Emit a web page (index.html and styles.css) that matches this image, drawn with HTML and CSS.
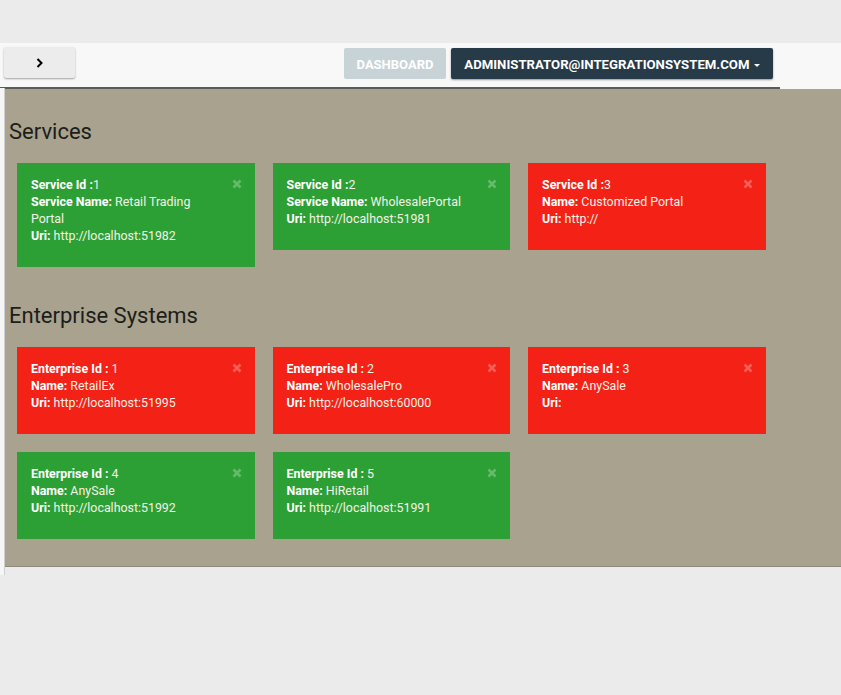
FILE: index.html
```html
<!DOCTYPE html>
<html>
<head>
<meta charset="utf-8">
<link rel="stylesheet" href="styles.css">
</head>
<body>
<header class="navbar">
  <div class="navbar-inner">
    <button class="toggle">
      <svg width="8" height="10" viewBox="0 0 8 10"><path d="M1.5 1 L5.5 5 L1.5 9" fill="none" stroke="#000" stroke-width="2"/></svg>
    </button>
    <div class="nav-right">
      <button class="btn btn-dash">DASHBOARD</button>
      <button class="btn btn-user">ADMINISTRATOR@INTEGRATIONSYSTEM.COM <span class="caret"></span></button>
    </div>
  </div>
</header>
<div class="layout">
  <aside class="strip"></aside>
  <main class="content">
    <h2 class="section-title">Services</h2>
    <div class="cards">
      <div class="card ok">
        <svg class="close" viewBox="0 0 10 10"><path d="M1.5 1.5 L8.5 8.5 M8.5 1.5 L1.5 8.5"/></svg>
        <div class="card-body">
          <div><b>Service Id :</b>1</div>
          <div><b>Service Name:</b> Retail Trading Portal</div>
          <div><b>Uri:</b> http://localhost:51982</div>
        </div>
      </div>
      <div class="card ok">
        <svg class="close" viewBox="0 0 10 10"><path d="M1.5 1.5 L8.5 8.5 M8.5 1.5 L1.5 8.5"/></svg>
        <div class="card-body">
          <div><b>Service Id :</b>2</div>
          <div><b>Service Name:</b> WholesalePortal</div>
          <div><b>Uri:</b> http://localhost:51981</div>
        </div>
      </div>
      <div class="card bad">
        <svg class="close" viewBox="0 0 10 10"><path d="M1.5 1.5 L8.5 8.5 M8.5 1.5 L1.5 8.5"/></svg>
        <div class="card-body">
          <div><b>Service Id :</b>3</div>
          <div><b>Name:</b> Customized Portal</div>
          <div><b>Uri:</b> http://</div>
        </div>
      </div>
    </div>
    <h2 class="section-title second">Enterprise Systems</h2>
    <div class="cards">
      <div class="card bad">
        <svg class="close" viewBox="0 0 10 10"><path d="M1.5 1.5 L8.5 8.5 M8.5 1.5 L1.5 8.5"/></svg>
        <div class="card-body">
          <div><b>Enterprise Id :</b> 1</div>
          <div><b>Name:</b> RetailEx</div>
          <div><b>Uri:</b> http://localhost:51995</div>
        </div>
      </div>
      <div class="card bad">
        <svg class="close" viewBox="0 0 10 10"><path d="M1.5 1.5 L8.5 8.5 M8.5 1.5 L1.5 8.5"/></svg>
        <div class="card-body">
          <div><b>Enterprise Id :</b> 2</div>
          <div><b>Name:</b> WholesalePro</div>
          <div><b>Uri:</b> http://localhost:60000</div>
        </div>
      </div>
      <div class="card bad">
        <svg class="close" viewBox="0 0 10 10"><path d="M1.5 1.5 L8.5 8.5 M8.5 1.5 L1.5 8.5"/></svg>
        <div class="card-body">
          <div><b>Enterprise Id :</b> 3</div>
          <div><b>Name:</b> AnySale</div>
          <div><b>Uri:</b></div>
        </div>
      </div>
      <div class="card ok">
        <svg class="close" viewBox="0 0 10 10"><path d="M1.5 1.5 L8.5 8.5 M8.5 1.5 L1.5 8.5"/></svg>
        <div class="card-body">
          <div><b>Enterprise Id :</b> 4</div>
          <div><b>Name:</b> AnySale</div>
          <div><b>Uri:</b> http://localhost:51992</div>
        </div>
      </div>
      <div class="card ok">
        <svg class="close" viewBox="0 0 10 10"><path d="M1.5 1.5 L8.5 8.5 M8.5 1.5 L1.5 8.5"/></svg>
        <div class="card-body">
          <div><b>Enterprise Id :</b> 5</div>
          <div><b>Name:</b> HiRetail</div>
          <div><b>Uri:</b> http://localhost:51991</div>
        </div>
      </div>
    </div>
  </main>
</div>
</body>
</html>
```
FILE: styles.css
```css
* { box-sizing: border-box; }
html, body { margin: 0; padding: 0; }
body {
  background: #ebebeb;
  font-family: Roboto, "Liberation Sans", sans-serif;
  padding-top: 43px;
  overflow: hidden;
}
.navbar {
  background: #f8f8f8;
  height: 46px;
}
.navbar-inner {
  width: 780px;
  height: 46px;
  display: flex;
  align-items: flex-start;
  justify-content: space-between;
  padding: 4px 7px 0 4px;
  border-bottom: 2px solid #5a5a5a;
}
.toggle {
  width: 71px;
  height: 31px;
  border: none;
  border-radius: 2px;
  background: #ececec;
  box-shadow: 0 1px 2px rgba(0,0,0,0.35);
  display: flex;
  align-items: center;
  justify-content: center;
  padding: 0;
}
.nav-right {
  display: flex;
  gap: 5px;
  margin-top: 1px;
}
.btn {
  height: 31px;
  border: none;
  border-radius: 2px;
  color: #fff;
  font-family: Roboto, "Liberation Sans", sans-serif;
  font-weight: 700;
  padding: 0;
}
.btn-dash {
  width: 102px;
  background: #c8d3d8;
  font-size: 13px;
  padding-top: 2px;
}
.btn-user {
  width: 322px;
  background: #263a47;
  font-size: 13.2px;
  padding-top: 2px;
  box-shadow: 0 1px 2px rgba(0,0,0,0.4);
}
.caret {
  display: inline-block;
  width: 0;
  height: 0;
  border-left: 3px solid transparent;
  border-right: 3px solid transparent;
  border-top: 3px solid #fff;
  vertical-align: middle;
  margin-left: 1px;
}
.layout {
  display: flex;
  align-items: flex-start;
}
.strip {
  width: 5px;
  height: 487px;
  background: #f6f6f6;
  border-right: 1px solid #cfcfcf;
  margin-top: -1px;
}
.content {
  flex: 1;
  background: #a8a28e;
  height: 477px;
  padding: 31px 0 0 4px;
  box-shadow: 0 1px 0 #8f8b7c;
}
.section-title {
  margin: 0;
  font-size: 22px;
  line-height: 24px;
  font-weight: 400;
  color: #1d1d1a;
}
.section-title.second {
  margin-top: 37px;
}
.cards {
  display: grid;
  grid-template-columns: repeat(3, 237.5px);
  column-gap: 18px;
  row-gap: 18px;
  margin: 19px 0 0 8px;
  align-items: start;
}
.card {
  position: relative;
  padding: 13px 14px 23px 14px;
  color: #f3f3e6;
  font-size: 12.4px;
  line-height: 17px;
}
.card b { color: #fff; font-weight: 700; }
.card.ok { background: #2ca034; }
.card.bad { background: #f32116; }
.card-body { padding-right: 22px; }
.close {
  position: absolute;
  top: 16px;
  right: 13px;
  width: 10px;
  height: 10px;
  fill: none;
  stroke: rgba(255,255,255,0.28);
  stroke-width: 2.6;
}
```
